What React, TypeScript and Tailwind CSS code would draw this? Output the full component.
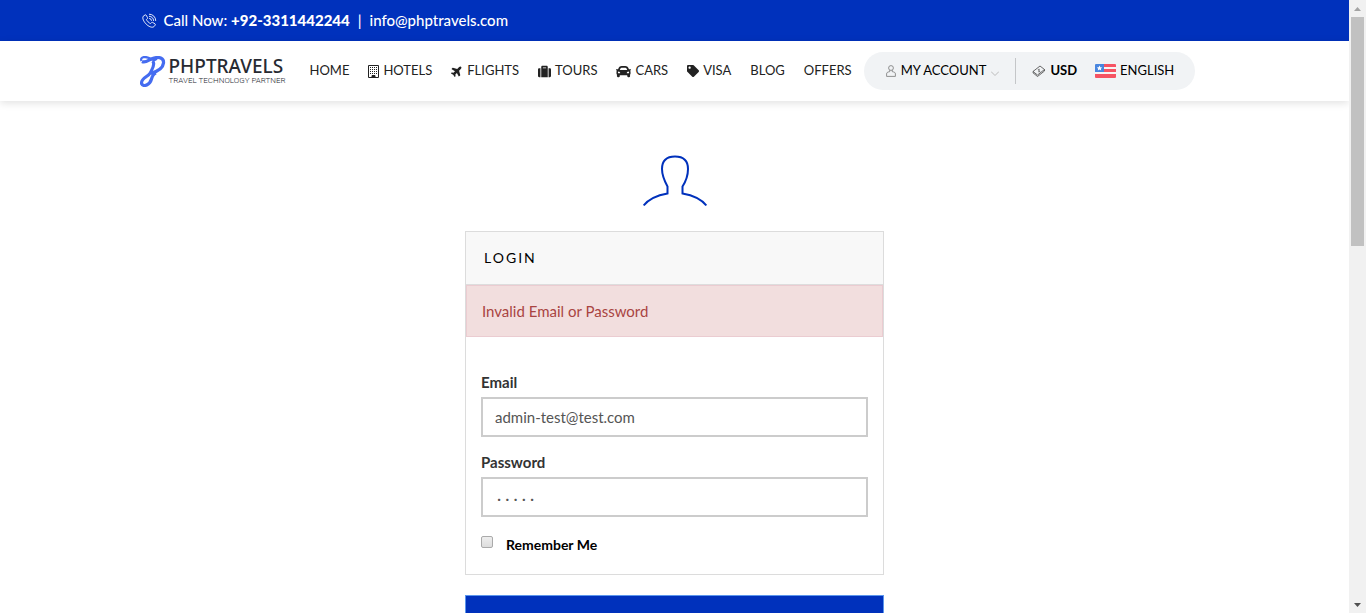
import type { ReactNode } from "react";
import { FaCar, FaPlane, FaSuitcase, FaTag } from "react-icons/fa";

function PhoneIcon() {
  return (
    <svg className="size-4" viewBox="0 0 16 16" fill="none" stroke="currentColor" strokeWidth="0.9" aria-hidden="true">
      <path d="M4 2 2.2 3.3C1 5.5 3 8.9 5.2 11.1c2.3 2.3 5.8 4 7.7 2.6l1.3-1.6c.3-.5.2-.9-.2-1.2l-2.4-1.5c-.4-.2-.8-.1-1.1.2l-1 1C8 10 5.900 7.900 5.400 6.600l1-1c.3-.3.3-.7.1-1L5.200 2.200C5 1.800 4.500 1.700 4 2Z" />
      <path d="M8 1.200a6.500 6.500 0 0 1 6.700 6.700M8 3.300a4.500 4.500 0 0 1 4.600 4.600M8.200 5.400a2.500 2.500 0 0 1 2.300 2.400" />
    </svg>
  );
}

function Logo() {
  return (
    <a href="#home" className="flex w-[146px] shrink-0 items-center gap-[3px]" aria-label="PHPTRAVELS home">
      <svg className="h-[31px] w-[26px] shrink-0" viewBox="0 0 26 31" fill="none" stroke="#456cf0" aria-hidden="true">
        <path d="M1.500 5C-.5.800 6-.3 11 3c4 2 7-.5 5-1.300" strokeWidth="2.200" />
        <path d="M2 5.500c4 2 7-2.200 12-3.500 6-1.500 10 .5 9.500 5-.5 5.500-6 8.500-13 10.500" strokeWidth="3.200" />
        <path d="M12.500 5c3.500 3-.8 9-2.300 12C8 21 1 22 1.500 27.500c2 4.500 8.500 1 10-4.500 1-3.500 3-5.500 4.500-6" strokeWidth="3.200" />
      </svg>
      <span className="flex flex-col text-[#272a32]">
        <span className="font-['Noto_Sans'] text-[19px] leading-5 font-medium">PHPTRAVELS</span>
        <span className="font-['Roboto'] text-[8px] leading-[10px] font-light whitespace-nowrap">TRAVEL TECHNOLOGY PARTNER</span>
      </span>
    </a>
  );
}

function HotelIcon() {
  return (
    <svg className="h-[13px] w-[11px]" viewBox="0 0 11 13" fill="none" stroke="currentColor" aria-hidden="true">
      <path d="M.5.500h10v12H.500z" />
      <path d="M2 2.500h7M2 4.500h7M2 6.500h7M2 8.500h7" strokeDasharray="1 1" strokeWidth="1" />
      <path d="M4 12.500v-2h3v2" fill="currentColor" />
    </svg>
  );
}

function UserOutline() {
  return (
    <svg className="h-3 w-[10px]" viewBox="0 0 10 12" fill="none" stroke="#777" strokeWidth="0.8" aria-hidden="true">
      <circle cx="5" cy="3" r="2.400" />
      <path d="M3.700 5.200v1.500C1.500 7 .6 7.500.6 9v2.400h8.800V9c0-1.500-.9-2-3.100-2.300V5.200" />
    </svg>
  );
}

function MoneyIcon() {
  return (
    <svg className="h-[13px] w-[14px]" viewBox="0 0 14 13" fill="none" stroke="#444" strokeWidth="0.8" aria-hidden="true">
      <path d="M1 6.500 8 1l4.500 3.500-7 5.500zM1 6.500v1.300L5.500 11.500l7-5.500V4.500" />
      <path d="M7.800 4.500c-.8-.6-1.900 0-1.400.7.400.5 1.200.2 1.400.8.200.8-1 1.100-1.600.5" />
    </svg>
  );
}

function Flag() {
  return (
    <svg className="h-[14px] w-[21px]" viewBox="0 0 21 14" aria-hidden="true">
      <rect width="21" height="14" rx="1" fill="#f8f4f4" />
      <path d="M9 0h11a1 1 0 0 1 1 1v2H9zM9 5h12v3H9zM0 10h21v3a1 1 0 0 1-1 1H1a1 1 0 0 1-1-1z" fill="#f65363" />
      <path d="M1 0h8v8H0V1a1 1 0 0 1 1-1z" fill="#4986df" />
      <path d="m4.500 1.500.8 1.700 1.900.2-1.400 1.300.4 1.900-1.700-1-1.700 1 .4-1.900-1.400-1.300 1.900-.2z" fill="#fff" />
    </svg>
  );
}

function NavItem({ label, icon }: { label: string; icon?: ReactNode }) {
  return (
    <a href={`#${label.toLowerCase()}`} className="flex items-center gap-1 whitespace-nowrap">
      {icon}
      {label}
    </a>
  );
}

function Header() {
  return (
    <header className="shrink-0">
      <div className="bg-[#0031bc] text-white">
        <div className="mx-auto flex h-[41px] max-w-[1100px] items-center px-4 text-[15px]">
          <PhoneIcon />
          <span className="ml-[7px] font-medium">Call Now: <strong className="font-black">+92-3311442244</strong></span>
          <span className="mx-2 font-medium">|</span>
          <a href="mailto:info@phptravels.com" className="font-medium">info@phptravels.com</a>
        </div>
      </div>
      <div className="bg-white shadow-[0_2px_8px_rgba(0,0,0,0.12)]">
        <div className="mx-auto flex h-[60px] max-w-[1100px] items-center px-[15px] text-[13px] text-[#222]">
          <Logo />
          <nav className="ml-6 flex items-center gap-[19px]" aria-label="Main">
            <NavItem label="HOME" />
            <NavItem label="HOTELS" icon={<HotelIcon />} />
            <NavItem label="FLIGHTS" icon={<FaPlane className="size-3 -rotate-45" />} />
            <NavItem label="TOURS" icon={<FaSuitcase className="size-[13px]" />} />
            <NavItem label="CARS" icon={<FaCar className="size-[15px]" />} />
            <NavItem label="VISA" icon={<FaTag className="size-3" />} />
            <NavItem label="BLOG" />
            <NavItem label="OFFERS" />
          </nav>
          <div className="ml-3 flex h-[38px] w-[331px] shrink-0 items-center rounded-full bg-[#f1f3f5] pl-[22px] text-black">
            <button type="button" className="flex items-center gap-[5px] whitespace-nowrap">
              <UserOutline />
              MY ACCOUNT
              <svg className="mt-1 h-[5px] w-2" viewBox="0 0 8 5" fill="none" stroke="#bbb" aria-hidden="true">
                <path d="m0 .5 4 4 4-4" />
              </svg>
            </button>
            <span className="mx-4 h-[26px] w-px bg-[#c4c6c8]" />
            <button type="button" className="flex items-center gap-1 font-bold">
              <MoneyIcon />
              USD
            </button>
            <button type="button" className="ml-[18px] flex items-center gap-1">
              <Flag />
              ENGLISH
            </button>
          </div>
        </div>
      </div>
    </header>
  );
}

function LoginForm() {
  return (
    <form className="mx-auto w-full max-w-[419px]">
      <svg className="mx-auto mb-6 h-[52px] w-16" viewBox="0 0 64 52" fill="none" stroke="#0031bc" strokeWidth="2" aria-hidden="true">
        <path d="M.700 50.500C5 45 13 40.500 24.500 38.500v-7C21.500 26 19 20 19 14 19 5.500 24 1.500 32 1.500S45 5.500 45 14c0 6-2 12-5.500 17.500v7C51 40.500 59 45 63.300 50.500" />
      </svg>
      <div className="border border-[#dcdcdc]">
        <h1 className="h-[53px] border-b border-[#ddd] bg-[#f8f8f8] px-[18px] text-sm leading-[52px] tracking-[2px] text-black">LOGIN</h1>
        <div role="alert" className="h-[52px] border border-[#ebccd1] bg-[#f2dede] px-[15px] text-[15px] leading-[50px] text-[#a94442]">
          Invalid Email or Password
        </div>
        <div className="px-[15px] pt-[35px] pb-[21px] text-[15px]">
          <label htmlFor="email" className="block h-[25px] leading-5 font-bold text-[#333]">Email</label>
          <input
            id="email"
            type="email"
            defaultValue="admin-test@test.com"
            className="block h-10 w-full border-2 border-[#ccc] bg-white px-3 text-[#555] outline-none"
          />
          <label htmlFor="password" className="mt-[15px] block h-[25px] leading-5 font-bold text-[#333]">Password</label>
          <input
            id="password"
            type="password"
            placeholder="· · · · ·"
            className="block h-10 w-full border-2 border-[#ccc] bg-white px-[14px] text-base text-[#555] outline-none placeholder:text-[#555]"
          />
          <label className="mt-[18px] flex h-[18px] gap-[13px] text-sm leading-5 font-bold text-black">
            <input
              type="checkbox"
              className="mt-px size-3 appearance-none rounded-xs border border-[#aaa] bg-linear-to-b from-[#eee] to-[#ddd]"
            />
            Remember Me
          </label>
        </div>
      </div>
      <button type="submit" aria-label="Login" className="mt-5 h-12 w-full border border-[#5b96ed] bg-[#0031bc]" />
    </form>
  );
}

function ScrollBar() {
  return (
    <div className="flex w-[17px] shrink-0 flex-col items-center bg-[#f1f1f1]" aria-hidden="true">
      <svg className="h-[17px] w-[17px] shrink-0" viewBox="0 0 17 17"><path d="M5 11h7L8.500 7z" fill="#a3a3a3" /></svg>
      <div className="h-[37.4%] w-[13px] bg-[#c1c1c1]" />
      <svg className="mt-auto h-[17px] w-[17px] shrink-0" viewBox="0 0 17 17"><path d="M5 7h7l-3.500 4z" fill="#505050" /></svg>
    </div>
  );
}

export default function App() {
  return (
    <div className="flex h-screen overflow-hidden bg-white font-['Lato','Liberation_Sans',sans-serif]">
      <div className="min-w-0 flex-1 overflow-hidden">
        <Header />
        <main className="px-4 pt-[54px]">
          <LoginForm />
        </main>
      </div>
      <ScrollBar />
    </div>
  );
}
